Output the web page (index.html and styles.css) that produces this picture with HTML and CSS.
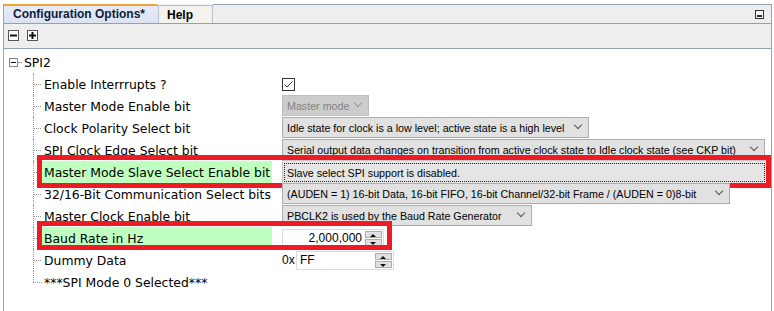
FILE: index.html
```html
<!DOCTYPE html>
<html lang="en">
<head>
    <meta charset="UTF-8">
    <title>Configuration Options</title>
    <link rel="stylesheet" href="styles.css">
</head>
<body>
    <div class="window">
        <div class="tabbar">
            <div class="tab active">Configuration Options*</div>
            <div class="tab">Help</div>
            <div class="tabfill">
                <svg class="minimize" width="9" height="9" viewBox="0 0 9 9">
                    <rect x="0.5" y="0.5" width="8" height="8" fill="#f4f4f4" stroke="#333"/>
                    <rect x="2" y="5" width="5" height="2" fill="#333"/>
                </svg>
            </div>
        </div>

        <div class="toolbar">
            <svg class="tool" width="11" height="11" viewBox="0 0 11 11">
                <rect x="0.5" y="0.5" width="10" height="10" fill="#fff" stroke="#555"/>
                <rect x="2" y="4.5" width="7" height="2" fill="#111"/>
            </svg>
            <svg class="tool" width="11" height="11" viewBox="0 0 11 11">
                <rect x="0.5" y="0.5" width="10" height="10" fill="#fff" stroke="#555"/>
                <rect x="2" y="4.5" width="7" height="2" fill="#111"/>
                <rect x="4.5" y="2" width="2" height="7" fill="#111"/>
            </svg>
        </div>

        <div class="tree">
            <div class="root">
                <svg class="expander" width="9" height="9" viewBox="0 0 9 9">
                    <rect x="0.5" y="0.5" width="8" height="8" fill="#fff" stroke="#888"/>
                    <rect x="2" y="4" width="5" height="1" fill="#111"/>
                </svg>
                <span class="stub"></span>
                <span class="name">SPI2</span>
            </div>

            <div class="children">
                <div class="row">
                    <span class="twig"></span>
                    <span class="label">Enable Interrrupts ?</span>
                    <span class="value">
                        <svg class="check" width="13" height="13" viewBox="0 0 13 13">
                            <rect x="0.5" y="0.5" width="12" height="12" fill="#fff" stroke="#333"/>
                            <polyline points="2.5,6.5 5,9 10.5,3.5" fill="none" stroke="#333" stroke-width="1"/>
                        </svg>
                    </span>
                </div>
                <div class="row">
                    <span class="twig"></span>
                    <span class="label">Master Mode Enable bit</span>
                    <span class="value">
                        <span class="combo disabled w-mode"><span class="text">Master mode</span><span class="chev"></span></span>
                    </span>
                </div>
                <div class="row">
                    <span class="twig"></span>
                    <span class="label">Clock Polarity Select bit</span>
                    <span class="value">
                        <span class="combo w-pol"><span class="text">Idle state for clock is a low level; active state is a high level</span><span class="chev"></span></span>
                    </span>
                </div>
                <div class="row">
                    <span class="twig"></span>
                    <span class="label">SPI Clock Edge Select bit</span>
                    <span class="value">
                        <span class="combo w-edge"><span class="text">Serial output data changes on transition from active clock state to Idle clock state (see CKP bit)</span><span class="chev"></span></span>
                    </span>
                </div>
                <div class="row marked">
                    <span class="twig"></span>
                    <span class="label hl">Master Mode Slave Select Enable bit</span>
                    <span class="value grow">
                        <span class="combo focused"><span class="text">Slave select SPI support is disabled.</span></span>
                    </span>
                </div>
                <div class="row">
                    <span class="twig"></span>
                    <span class="label">32/16-Bit Communication Select bits</span>
                    <span class="value">
                        <span class="combo w-mode32"><span class="text">(AUDEN = 1) 16-bit Data, 16-bit FIFO, 16-bit Channel/32-bit Frame / (AUDEN = 0)8-bit</span><span class="chev"></span></span>
                    </span>
                </div>
                <div class="row">
                    <span class="twig"></span>
                    <span class="label">Master Clock Enable bit</span>
                    <span class="value">
                        <span class="combo w-clk"><span class="text">PBCLK2 is used by the Baud Rate Generator</span><span class="chev"></span></span>
                    </span>
                </div>
                <div class="row marked short">
                    <span class="twig"></span>
                    <span class="label hl">Baud Rate in Hz</span>
                    <span class="value">
                        <span class="spin baud">
                            <span class="field right">2,000,000</span>
                            <span class="arrows"><span class="up"></span><span class="down"></span></span>
                        </span>
                    </span>
                </div>
                <div class="row">
                    <span class="twig"></span>
                    <span class="label">Dummy Data</span>
                    <span class="value">
                        <span class="prefix">0x</span>
                        <span class="spin hex">
                            <span class="field">FF</span>
                            <span class="arrows"><span class="up"></span><span class="down"></span></span>
                        </span>
                    </span>
                </div>
                <div class="row last">
                    <span class="twig"></span>
                    <span class="label">***SPI Mode 0 Selected***</span>
                </div>
            </div>
        </div>
    </div>
</body>
</html>
```

FILE: styles.css
```css
body{
    margin: 0;
    background: #ffffff;
    font-family: "DejaVu Sans", sans-serif;
    font-size: 12.4px;
    color: #000;
}

.window{
    margin: 4px 2px 0 3px;
    border-left: 1px solid #9aa7b5;
    border-right: 1px solid #9aa7b5;
    height: 320px;
    overflow: hidden;
}

/* tabs */

.tabbar{
    display: flex;
    height: 19px;
    border-bottom: 1px solid #8fa1b4;
    background: #eeeeee;
}

.tab{
    font-family: "Liberation Sans", sans-serif;
    font-weight: bold;
    font-size: 12px;
    line-height: 17px;
    padding: 0 9px;
    box-sizing: border-box;
    white-space: nowrap;
}

.tab.active{
    width: 155px;
    background: linear-gradient(#e6ebf7, #dbe3f3);
    border-top: 2px solid #f2a33a;
    border-right: 1px solid #b9c3d1;
    border-top-right-radius: 3px;
    color: #0f1a3a;
}

.tab:not(.active){
    width: 54px;
    margin-top: 1px;
    background: #f4f2ec;
    border-top: 1px solid #b6bfcb;
    border-right: 1px solid #b6bfcb;
    padding-left: 8px;
    line-height: 18px;
}

.tabfill{
    flex: 1;
    display: flex;
    justify-content: flex-end;
    align-items: flex-start;
    border-top: 1px solid #8fa1b4;
    padding: 5px 7px 0 0;
}

/* toolbar */

.toolbar{
    display: flex;
    gap: 8px;
    height: 25px;
    padding: 6px 0 0 4px;
    box-sizing: border-box;
    background: #eeeeee;
    border-bottom: 1px solid #8fa1b4;
}

/* tree */

.tree{
    padding-top: 2px;
    background: #fff;
}

.root{
    display: flex;
    align-items: center;
    height: 22px;
    padding-left: 5px;
}

.stub{
    width: 4px;
    margin: 0 1px 0 0;
    border-top: 1px dotted #888;
}

.name{
    padding-left: 1px;
}

.children{
    padding-left: 29px;
}

.row{
    display: flex;
    align-items: center;
    height: 22px;
    position: relative;
}

.twig{
    width: 9px;
    align-self: stretch;
    border-left: 1px dotted #999;
    background: repeating-linear-gradient(to right, #999 0 1px, transparent 1px 2px) left center / 100% 1px no-repeat;
    box-sizing: border-box;
}

.row.last .twig{
    border-left: none;
    background:
        repeating-linear-gradient(to right, #999 0 1px, transparent 1px 2px) left center / 100% 1px no-repeat,
        repeating-linear-gradient(#999 0 1px, transparent 1px 2px) left top / 1px 50% no-repeat;
}

.label{
    width: 230px;
    height: 100%;
    padding-left: 2px;
    box-sizing: border-box;
    display: flex;
    align-items: center;
    white-space: nowrap;
}

.label.hl{
    background: #bfffbf;
}

.value{
    margin-left: 10px;
    display: flex;
    align-items: center;
}

.value.grow{
    flex: 1;
    margin-right: 4px;
    align-self: stretch;
}

/* red annotation boxes */

.row.marked::after{
    content: "";
    position: absolute;
    left: 4px;
    right: 0;
    top: -6px;
    bottom: -5px;
    border: 5px solid #ed1c24;
    pointer-events: none;
}

.row.marked.short::after{
    right: auto;
    width: 355px;
    bottom: -1px;
    box-sizing: border-box;
}

/* combos */

.combo{
    height: 21px;
    box-sizing: border-box;
    border: 1px solid #adadad;
    background: #e1e1e1;
    display: flex;
    align-items: center;
    padding-left: 4px;
    font-family: "Liberation Sans", sans-serif;
    font-size: 10.7px;
    white-space: nowrap;
    overflow: hidden;
    margin-top: -1px;
}

.combo .text{
    flex: 1;
    overflow: hidden;
}

.chev{
    width: 17px;
    height: 100%;
    flex-shrink: 0;
    position: relative;
}

.chev::before{
    content: "";
    position: absolute;
    left: 4px;
    top: 4px;
    width: 5px;
    height: 5px;
    border-right: 1px solid #555;
    border-bottom: 1px solid #555;
    transform: rotate(45deg);
}

.combo.disabled{
    background: #cccccc;
    border-color: #bfbfbf;
    color: #838383;
}

.combo.disabled .chev::before{
    border-color: #9a9a9a;
}

.combo.focused{
    flex: 1;
    height: 24px;
    margin-top: 0;
    align-self: center;
    background: #e5e5e5;
    border-color: #c4c4c4;
    padding: 0 1px;
}

.combo.focused .text{
    border: 1px dotted #222;
    padding: 3px 2px 2px;
    line-height: 12px;
}

.w-mode{ width: 87px; }
.w-pol{ width: 307px; }
.w-edge{ width: 483px; }
.w-mode32{ width: 448px; }
.w-clk{ width: 250px; }

/* spinners */

.spin{
    display: flex;
    height: 19px;
    background: #fff;
    font-family: "Liberation Sans", sans-serif;
    font-size: 12px;
}

.field{
    border: 1px solid #dcdcdc;
    border-right: none;
    line-height: 17px;
    padding: 0 3px;
}

.baud .field{
    width: 83px;
    box-sizing: border-box;
    text-align: right;
}

.hex .field{
    width: 79px;
    box-sizing: border-box;
}

.arrows{
    width: 17px;
    display: flex;
    flex-direction: column;
    gap: 1px;
    padding: 1px 1px 1px 0;
    border: 1px solid #dcdcdc;
    border-left: none;
}

.arrows span{
    flex: 1;
    background: #e1e1e1;
    border: 1px solid #adadad;
    position: relative;
}

.arrows .up::before,
.arrows .down::before{
    content: "";
    position: absolute;
    left: 4px;
    border-left: 3px solid transparent;
    border-right: 3px solid transparent;
}

.arrows .up::before{
    top: 2px;
    border-bottom: 3px solid #111;
}

.arrows .down::before{
    top: 2px;
    border-top: 3px solid #111;
}

.prefix{
    font-family: "Liberation Sans", sans-serif;
    font-size: 12px;
    width: 14px;
}
```
